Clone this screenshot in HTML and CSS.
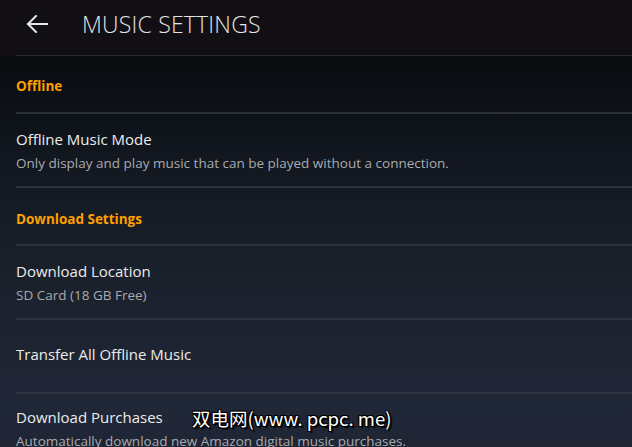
FILE: index.html
```html
<!DOCTYPE html>
<html lang="en">
<head>
<meta charset="utf-8">
<title>Music Settings</title>
<link rel="stylesheet" href="styles.css">
</head>
<body>
<div class="screen">
  <header class="topbar">
    <svg class="back" width="22" height="18" viewBox="0 0 22 18" aria-hidden="true">
      <path d="M21 9H2M10 1L2 9l8 8" fill="none" stroke="#e6e6e6" stroke-width="2" stroke-linecap="square"/>
    </svg>
    <h1 class="title">MUSIC SETTINGS</h1>
  </header>
  <main class="list">
    <div class="section first">Offline</div>
    <div class="item">
      <div class="item-title">Offline Music Mode</div>
      <div class="item-sub">Only display and play music that can be played without a connection.</div>
    </div>
    <div class="section">Download Settings</div>
    <div class="item">
      <div class="item-title">Download Location</div>
      <div class="item-sub">SD Card (18 GB Free)</div>
    </div>
    <div class="item single">
      <div class="item-title">Transfer All Offline Music</div>
    </div>
    <div class="item last">
      <div class="item-title">Download Purchases</div>
      <div class="item-sub">Automatically download new Amazon digital music purchases.</div>
    </div>
  </main>
  <div class="watermark">双电网(www. pcpc. me)</div>
</div>
</body>
</html>
```
FILE: styles.css
```css
* { box-sizing: border-box; }
html, body { margin: 0; padding: 0; }
body {
  width: 632px;
  height: 447px;
  overflow: hidden;
  background: #111014;
  font-family: "Open Sans", "Noto Sans", sans-serif;
}
.screen {
  position: relative;
  width: 632px;
  height: 447px;
  overflow: hidden;
  display: flex;
  flex-direction: column;
}
.topbar {
  height: 56px;
  flex: none;
  background: #110f14;
  display: flex;
  align-items: center;
  padding-left: 26px;
  padding-bottom: 9px;
  position: relative;
}
.topbar::after {
  content: "";
  position: absolute;
  left: 16px;
  right: 0;
  bottom: 0;
  height: 1px;
  background: #2a292d;
}
.back { display: block; }
.title {
  margin: 0 0 0 34px;
  font-weight: 300;
  font-size: 23px;
  letter-spacing: 0.2px;
  color: #e4e4e4;
}
.list {
  flex: 1;
  padding-left: 16px;
  background: linear-gradient(to bottom, #090b0f 0%, #121720 25%, #1b212c 55%, #202737 85%, #1e2432 100%);
}
.section {
  height: 58px;
  display: flex;
  align-items: center;
  color: #ff9f00;
  font-weight: 700;
  font-size: 13.5px;
  padding-top: 5px;
  border-bottom: 2px solid #2a303a;
}
.section.first { padding-top: 4px; }
.item {
  height: 74px;
  display: flex;
  flex-direction: column;
  justify-content: center;
  border-bottom: 2px solid #2c323e;
  gap: 5px;
}
.item.single { padding-bottom: 4px; }
.item.last { border-bottom: none; padding-bottom: 6px; flex: none; }
.item-title {
  color: #ececec;
  font-size: 15px;
  line-height: 20px;
}
.item-sub {
  color: #a9abae;
  font-size: 13.5px;
  line-height: 18px;
  white-space: nowrap;
}
.watermark {
  position: absolute;
  left: 192px;
  top: 405px;
  font-family: "Noto Sans CJK SC", sans-serif;
  font-size: 18.5px;
  line-height: 26px;
  color: #ffffff;
  text-shadow: 1px 1px 0 #000, -1px -1px 0 #000, 1px -1px 0 #000, -1px 1px 0 #000, 2px 2px 1px #000;
}
```
